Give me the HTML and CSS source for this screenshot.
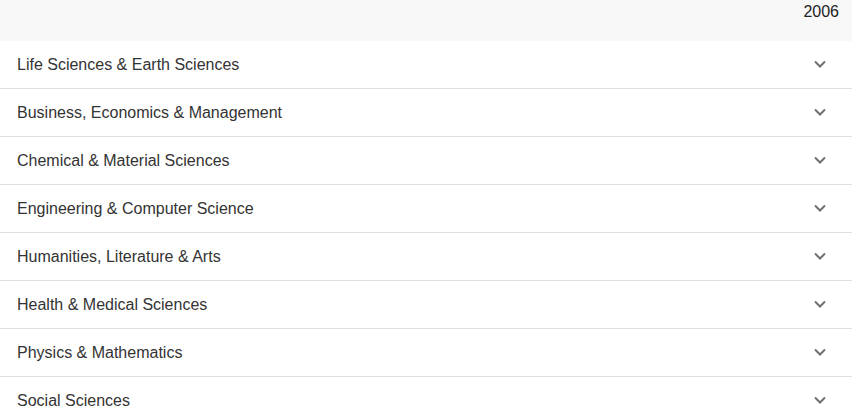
FILE: index.html
```html
<!DOCTYPE html>
<html>
<head>
<meta charset="utf-8">
<link rel="stylesheet" href="styles.css">
</head>
<body>
<div class="header"><span class="year">2006</span></div>
<ul class="list">
  <li class="row"><span class="label">Life Sciences &amp; Earth Sciences</span><svg class="chev" viewBox="0 0 12 8"><path d="M1 1.5 L6 6.5 L11 1.5"/></svg></li>
  <li class="row"><span class="label">Business, Economics &amp; Management</span><svg class="chev" viewBox="0 0 12 8"><path d="M1 1.5 L6 6.5 L11 1.5"/></svg></li>
  <li class="row"><span class="label">Chemical &amp; Material Sciences</span><svg class="chev" viewBox="0 0 12 8"><path d="M1 1.5 L6 6.5 L11 1.5"/></svg></li>
  <li class="row"><span class="label">Engineering &amp; Computer Science</span><svg class="chev" viewBox="0 0 12 8"><path d="M1 1.5 L6 6.5 L11 1.5"/></svg></li>
  <li class="row"><span class="label">Humanities, Literature &amp; Arts</span><svg class="chev" viewBox="0 0 12 8"><path d="M1 1.5 L6 6.5 L11 1.5"/></svg></li>
  <li class="row"><span class="label">Health &amp; Medical Sciences</span><svg class="chev" viewBox="0 0 12 8"><path d="M1 1.5 L6 6.5 L11 1.5"/></svg></li>
  <li class="row"><span class="label">Physics &amp; Mathematics</span><svg class="chev" viewBox="0 0 12 8"><path d="M1 1.5 L6 6.5 L11 1.5"/></svg></li>
  <li class="row"><span class="label">Social Sciences</span><svg class="chev" viewBox="0 0 12 8"><path d="M1 1.5 L6 6.5 L11 1.5"/></svg></li>
</ul>
</body>
</html>
```
FILE: styles.css
```css
html, body {
  margin: 0;
  padding: 0;
  background: #fff;
  font-family: "Liberation Sans", Arial, sans-serif;
}
.header {
  height: 41px;
  background: #f8f8f8;
  display: flex;
  justify-content: flex-end;
  align-items: flex-start;
  padding-right: 13px;
  box-sizing: border-box;
}
.year {
  font-size: 16px;
  color: #222;
  line-height: 18px;
  margin-top: 3px;
}
.list {
  list-style: none;
  margin: 0;
  padding: 0;
}
.row {
  height: 47px;
  border-bottom: 1px solid #e0e0e0;
  display: flex;
  align-items: center;
  justify-content: space-between;
  padding: 0 26px 0 17px;
}
.label {
  font-size: 16px;
  color: #333;
  line-height: 20px;
  padding-top: 1px;
}
.chev {
  width: 12px;
  height: 8px;
  margin-top: -2px;
}
.chev path {
  fill: none;
  stroke: #707070;
  stroke-width: 2;
}
```
